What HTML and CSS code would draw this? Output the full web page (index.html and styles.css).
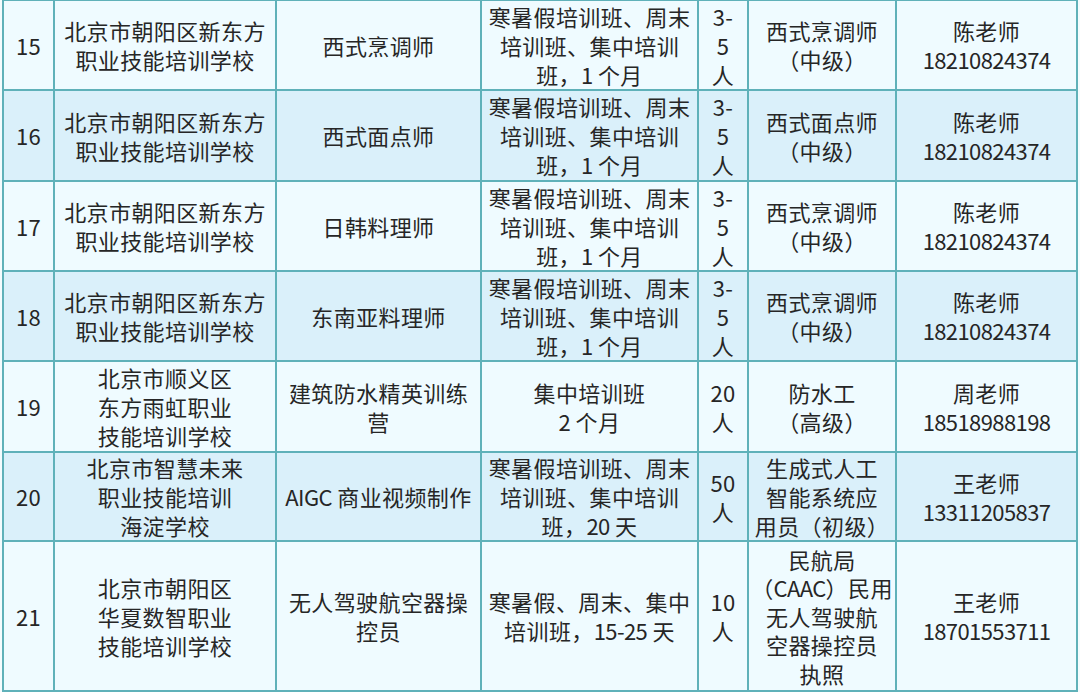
FILE: index.html
```html
<!DOCTYPE html>
<html lang="zh-CN">
<head>
<meta charset="utf-8">
<title>培训项目</title>
<link rel="stylesheet" href="styles.css">
</head>
<body>
<table class="grid">
  <colgroup>
    <col class="c-no"><col class="c-school"><col class="c-course"><col class="c-time"><col class="c-num"><col class="c-cert"><col class="c-contact">
  </colgroup>
  <tbody>
    <tr class="r-std">
      <td>15</td>
      <td>北京市朝阳区新东方<br>职业技能培训学校</td>
      <td>西式烹调师</td>
      <td>寒暑假培训班、周末<br>培训班、集中培训<br>班，<span class="n">1</span> 个月</td>
      <td>3-<br>5<br>人</td>
      <td>西式烹调师<br>（中级）</td>
      <td>陈老师<br><span class="n">18210824374</span></td>
    </tr>
    <tr class="r-std2 alt">
      <td>16</td>
      <td>北京市朝阳区新东方<br>职业技能培训学校</td>
      <td>西式面点师</td>
      <td>寒暑假培训班、周末<br>培训班、集中培训<br>班，<span class="n">1</span> 个月</td>
      <td>3-<br>5<br>人</td>
      <td>西式面点师<br>（中级）</td>
      <td>陈老师<br><span class="n">18210824374</span></td>
    </tr>
    <tr class="r-std">
      <td>17</td>
      <td>北京市朝阳区新东方<br>职业技能培训学校</td>
      <td>日韩料理师</td>
      <td>寒暑假培训班、周末<br>培训班、集中培训<br>班，<span class="n">1</span> 个月</td>
      <td>3-<br>5<br>人</td>
      <td>西式烹调师<br>（中级）</td>
      <td>陈老师<br><span class="n">18210824374</span></td>
    </tr>
    <tr class="r-std alt">
      <td>18</td>
      <td>北京市朝阳区新东方<br>职业技能培训学校</td>
      <td>东南亚料理师</td>
      <td>寒暑假培训班、周末<br>培训班、集中培训<br>班，<span class="n">1</span> 个月</td>
      <td>3-<br>5<br>人</td>
      <td>西式烹调师<br>（中级）</td>
      <td>陈老师<br><span class="n">18210824374</span></td>
    </tr>
    <tr class="r-19">
      <td>19</td>
      <td>北京市顺义区<br>东方雨虹职业<br>技能培训学校</td>
      <td>建筑防水精英训练<br>营</td>
      <td>集中培训班<br><span class="n">2</span> 个月</td>
      <td>20<br>人</td>
      <td>防水工<br>（高级）</td>
      <td>周老师<br><span class="n">18518988198</span></td>
    </tr>
    <tr class="r-20 alt">
      <td>20</td>
      <td>北京市智慧未来<br>职业技能培训<br>海淀学校</td>
      <td><span class="n">AIGC</span> 商业视频制作</td>
      <td>寒暑假培训班、周末<br>培训班、集中培训<br>班，<span class="n">20</span> 天</td>
      <td>50<br>人</td>
      <td>生成式人工<br>智能系统应<br>用员（初级）</td>
      <td>王老师<br><span class="n">13311205837</span></td>
    </tr>
    <tr class="r-21">
      <td>21</td>
      <td>北京市朝阳区<br>华夏数智职业<br>技能培训学校</td>
      <td>无人驾驶航空器操<br>控员</td>
      <td>寒暑假、周末、集中<br>培训班，<span class="n">15-25</span> 天</td>
      <td>10<br>人</td>
      <td><div class="tight">民航局<br>（<span class="n">CAAC</span>）民用<br>无人驾驶航<br>空器操控员<br>执照</div></td>
      <td>王老师<br><span class="n">18701553711</span></td>
    </tr>
  </tbody>
</table>
</body>
</html>
```

FILE: styles.css
```css
html, body {
  margin: 0;
  padding: 0;
  background: #f4fcfe;
}
body {
  overflow: hidden;
  width: 1080px;
  height: 692px;
}
.grid {
  border-collapse: collapse;
  table-layout: fixed;
  width: 1074px;
  margin: -1px 0 0 2px;
  font-family: "Noto Sans CJK SC", "Noto Sans", sans-serif;
  font-size: 22px;
  line-height: 29px;
  color: #262626;
  letter-spacing: 0.4px;
}
.c-no { width: 51px; }
.c-school { width: 222px; }
.c-course { width: 205px; }
.c-time { width: 217px; }
.c-num { width: 50px; }
.c-cert { width: 148px; }
.c-contact { width: 181px; }
.grid td {
  border: 2px solid #5fb1b9;
  padding: 0;
  text-align: center;
  vertical-align: middle;
  background: #effbff;
  white-space: nowrap;
  overflow: hidden;
}
.grid tr.alt td {
  background: #daf0fa;
}
.r-std td { height: 88px; }
.r-std2 td { height: 89px; }
.r-19 td { height: 89px; }
.r-20 td { height: 87px; }
.r-21 td { height: 148px; }
.tight {
  line-height: 28.6px;
}
.n {
  letter-spacing: -0.6px;
}
```
